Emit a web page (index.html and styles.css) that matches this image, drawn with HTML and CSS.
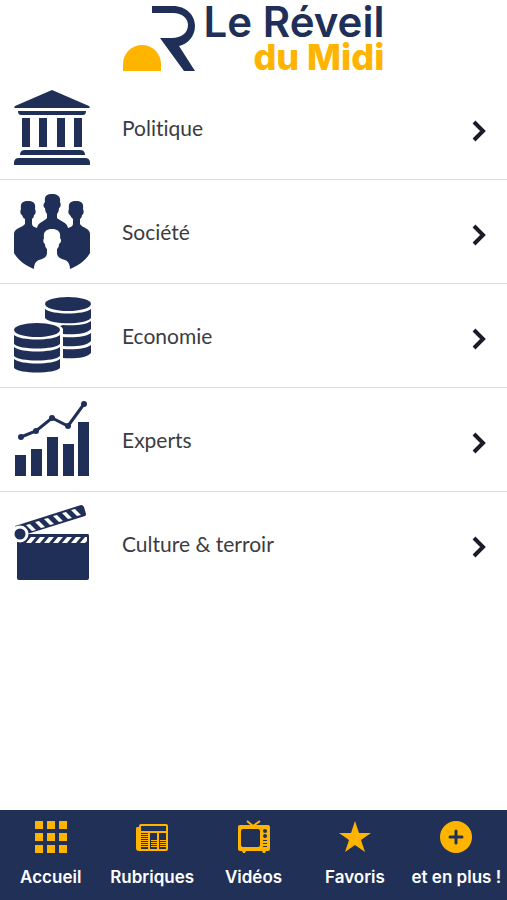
FILE: index.html
```html
<!DOCTYPE html>
<html lang="fr">

<head>
    <meta charset="UTF-8">
    <meta name="viewport" content="width=device-width, initial-scale=1.0">
    <title>Le Réveil du Midi</title>
    <link rel="stylesheet" href="styles.css">
</head>

<body>
    <header class="header">
        <svg class="logo-mark" viewBox="0 0 73 66" aria-hidden="true">
            <path class="navy" d="M29 0H50C63 0 72 9 72 20C72 30 65 38 56 40L72 65H61L37 32H49C58 32 65 27 65 19C65 12 59 7 50 7H29z"/>
            <path class="gold" d="M0 65V58a19 19 0 0 1 38 0v7z"/>
        </svg>
        <h1 class="logo-text">
            <span class="logo-top">Le Réveil</span>
            <span class="logo-bottom">du Midi</span>
        </h1>
    </header>

    <main class="categories">
        <a class="category" href="#politique">
            <svg class="category-icon" viewBox="0 0 76 76" aria-hidden="true">
                <path d="M38 0L75 16Q77 18 74 18H2Q-1 18 1 16z"/>
                <path d="M4 21H72Q72 25 69 25H7Q4 25 4 21z"/>
                <path d="M8 28h8v29H8zM25 28h8v29h-8zM43 28h8v29h-8zM60 28h8v29h-8z"/>
                <path d="M6 65Q6 60 11 60H66Q71 60 71 65z"/>
                <path d="M0 75V73Q0 68 5 68H71Q76 68 76 73V75z"/>
            </svg>
            <span class="category-name">Politique</span>
            <svg class="chevron" viewBox="0 0 16 24" aria-hidden="true"><path d="M3 4L12 13L3 22"/></svg>
        </a>

        <a class="category" href="#societe">
            <svg class="category-icon" viewBox="0 0 76 76" aria-hidden="true">
                <path d="M31 8C30 2 33 0 38 0S47 2 46 8C47 10 47 13 45 14C45 17 44 19 43 20V24C46 27 53 28 54 34C57 33 59 32 59 30V25C58 24 57 23 56 21C54 20 54 17 55 15C54 9 57 7 62 7S70 9 69 15C70 17 70 20 68 21C68 23 67 24 66 25V30C68 34 76 34 76 40V59C72 66 64 72 56 75C56 70 54 67 51 66C47 65 43 63 43 59V55C44 54 45 53 45 50C47 49 48 46 46 44C47 38 44 35 38 35S29 38 30 44C29 46 29 49 31 50C31 53 32 54 33 55V59C33 63 29 65 25 66C22 67 20 70 20 75C12 72 4 66 0 59V40C0 34 8 34 11 30V25C9 24 9 23 8 21C6 20 6 17 7 15C6 9 9 7 14 7S22 9 21 15C22 17 22 20 20 21C20 23 19 24 18 25V30C18 32 20 33 23 34C24 28 31 27 33 24V20C32 19 31 17 31 14C29 13 29 10 31 8z"/>
            </svg>
            <span class="category-name">Société</span>
            <svg class="chevron" viewBox="0 0 16 24" aria-hidden="true"><path d="M3 4L12 13L3 22"/></svg>
        </a>

        <a class="category" href="#economie">
            <svg class="category-icon" viewBox="0 0 76 76" aria-hidden="true">
                <ellipse cx="54" cy="6" rx="23" ry="7"/>
                <path d="M31 11C38 17 70 17 77 11V20C72 27 36 27 31 20z"/>
                <path d="M49 27C60 28 72 27 77 23V31C73 36 59 37 49 36V31Q48 29 46 28z"/>
                <path d="M49 39C60 40 72 39 77 35V43C73 48 59 49 49 48z"/>
                <path d="M49 51C60 52 72 51 77 47V55C73 60 59 61 49 60z"/>
                <ellipse cx="23" cy="32" rx="23" ry="7"/>
                <path d="M0 37C7 43 39 43 46 37V46C41 52 5 52 0 46z"/>
                <path d="M0 49C7 55 39 55 46 49V58C41 64 5 64 0 58z"/>
                <path d="M0 61C7 67 39 67 46 61V70C41 76 5 76 0 70z"/>
            </svg>
            <span class="category-name">Economie</span>
            <svg class="chevron" viewBox="0 0 16 24" aria-hidden="true"><path d="M3 4L12 13L3 22"/></svg>
        </a>

        <a class="category" href="#experts">
            <svg class="category-icon" viewBox="0 0 76 76" aria-hidden="true">
                <path d="M1 53h11v21H1zM17 47h11v27H17zM33 35h11v39H33zM49 42h11v32H49zM64 20h11v54H64z"/>
                <path class="curve" d="M7 35L22 29L38 16L54 24L70 2"/>
                <circle cx="7" cy="35" r="3"/>
                <circle cx="22" cy="29" r="3"/>
                <circle cx="38" cy="16" r="3"/>
                <circle cx="54" cy="24" r="3"/>
                <circle cx="70" cy="2" r="3"/>
            </svg>
            <span class="category-name">Experts</span>
            <svg class="chevron" viewBox="0 0 16 24" aria-hidden="true"><path d="M3 4L12 13L3 22"/></svg>
        </a>

        <a class="category" href="#culture">
            <svg class="category-icon" viewBox="0 0 76 76" aria-hidden="true">
                <!-- slate -->
                <path d="M3 28H74Q75 28 75 30V72Q75 74 73 74H5Q3 74 3 72z"/>
                <path class="cut" d="M17 31h5l-5 6h-5zM26 31h5l-5 6h-5zM35 31h5l-5 6h-5zM44 31h5l-5 6h-5zM53 31h5l-5 6h-5zM62 31h5l-5 6h-5zM71 31h2v4l-2 2h-5z"/>
                <!-- clap stick -->
                <path d="M1 20L67 -1Q69 -1 70 1L72 8Q72 10 71 10L10 29z"/>
                <path class="cut" d="M12 19l4-1 6 6-4 1zM21 16l4-1 6 6-4 1zM30 13l4-1 6 6-4 1zM39 10l4-1 6 6-4 1zM48 7l4-1 6 6-4 1zM57 4l4-1 6 6-4 1z"/>
                <circle class="hinge" cx="6" cy="28" r="7"/>
            </svg>
            <span class="category-name">Culture &amp; terroir</span>
            <svg class="chevron" viewBox="0 0 16 24" aria-hidden="true"><path d="M3 4L12 13L3 22"/></svg>
        </a>
    </main>

    <nav class="tabbar">
        <a class="tab" href="#accueil">
            <svg class="tab-icon" viewBox="0 0 34 34" aria-hidden="true">
                <path d="M1 1h8v8H1zM13 1h8v8h-8zM25 1h8v8h-8zM1 13h8v8H1zM13 13h8v8h-8zM25 13h8v8h-8zM1 25h8v8H1zM13 25h8v8h-8zM25 25h8v8h-8z"/>
            </svg>
            Accueil
        </a>
        <a class="tab" href="#rubriques">
            <svg class="tab-icon" viewBox="0 0 34 34" aria-hidden="true">
                <path d="M4 7H2Q1 7 1 9V28Q1 31 4 31H6V29H4z"/>
                <rect class="line" x="5" y="5" width="27" height="25" rx="1"/>
                <path class="line" d="M5 12H32M14 12V30M23 12V30"/>
                <path class="thin" d="M6 14.500h7M6 16.500h7M6 18.500h7M6 20.500h7M6 22.500h7M6 24.500h7M6 26.500h7M16 20.500h6M16 22.500h6M16 24.500h6M16 26.500h6M25 20.500h6M25 22.500h6M25 24.500h6M25 26.500h6"/>
            </svg>
            Rubriques
        </a>
        <a class="tab" href="#videos">
            <svg class="tab-icon" viewBox="0 0 34 34" aria-hidden="true">
                <path class="line" d="M10 1L16 6L23 1"/>
                <path fill-rule="evenodd" d="M3 5H31Q33 5 33 7V29Q33 31 31 31H29L28 33H26L25 31H9L8 33H6L5 31H3Q1 31 1 29V7Q1 5 3 5zM6 9Q4 9 4 11V25Q4 27 6 27H21Q23 27 23 25V11Q23 9 21 9z"/>
                <circle class="dark" cx="28" cy="11" r="2"/>
                <circle class="dark" cx="28" cy="16" r="2"/>
                <path class="dark" d="M26 20h4v1h-4zM26 23h4v1h-4zM26 26h4v1h-4z"/>
            </svg>
            Vidéos
        </a>
        <a class="tab" href="#favoris">
            <svg class="tab-icon" viewBox="0 0 34 34" aria-hidden="true">
                <path d="M17 1L21 13H33L23 20L27 32L17 25L7 32L11 20L1 13H13z"/>
            </svg>
            Favoris
        </a>
        <a class="tab" href="#plus">
            <svg class="tab-icon" viewBox="0 0 34 34" aria-hidden="true">
                <circle cx="17" cy="17" r="16"/>
                <path class="plus" d="M17 11V23M11 17H23"/>
            </svg>
            et en plus !
        </a>
    </nav>
</body>

</html>
```
FILE: styles.css
```css
* {
    box-sizing: border-box;
}

body {
    margin: 0;
    min-height: 100vh;
    display: flex;
    flex-direction: column;
    background-color: #fff;
    font-family: Inter, sans-serif;
}

a {
    color: inherit;
    text-decoration: none;
}

svg {
    flex: none;
    overflow: visible;
}

.navy {
    fill: #202f57;
}

.gold {
    fill: #ffb400;
}

/* Logo */
.header {
    display: flex;
    justify-content: center;
    gap: 8px;
    padding: 6px 0 4px;
}

.logo-mark {
    width: 73px;
    height: 66px;
}

.logo-text {
    display: flex;
    flex-direction: column;
    align-items: flex-end;
    height: 66px;
    margin: 0;
    color: #202f57;
    white-space: nowrap;
}

.logo-top {
    font-size: 42px;
    font-weight: 600;
    line-height: 32px;
}

.logo-bottom {
    color: #ffb400;
    font-size: 36px;
    font-weight: 800;
    line-height: 38px;
}

/* List of categories */
.categories {
    flex: 1;
}

.category {
    display: flex;
    align-items: center;
    padding: 14px 20px 13px 14px;
    border-bottom: 1px solid #dcdcdc;
    color: #3c3c40;
}

.category:last-child {
    border-bottom-color: transparent;
}

.category-icon {
    width: 76px;
    height: 76px;
    margin-right: 32px;
    fill: #202f57;
}

.category-name {
    flex: 1;
    font-family: Lato, sans-serif;
    font-size: 21px;
    font-variant-ligatures: none;
    line-height: 28px;
}

.curve {
    fill: none;
    stroke: #202f57;
    stroke-width: 3;
}

.cut {
    fill: #fff;
}

.hinge {
    stroke: #fff;
    stroke-width: 3;
}

.chevron {
    width: 16px;
    height: 24px;
    margin-top: 4px;
    fill: none;
    stroke: #1c1c26;
    stroke-width: 4;
}

/* Bottom bar */
.tabbar {
    display: flex;
    padding: 10px 0 11px;
    background-color: #213057;
}

.tab {
    flex: 1 1 0;
    min-width: 0;
    display: flex;
    flex-direction: column;
    align-items: center;
    gap: 11px;
    color: #fff;
    font-size: 17px;
    font-weight: 600;
    line-height: 24px;
    white-space: nowrap;
}

.tab-icon {
    width: 34px;
    height: 34px;
    fill: #ffb400;
}

.line {
    fill: none;
    stroke: #ffb400;
    stroke-width: 2;
}

.thin {
    stroke: #ffb400;
    stroke-width: 1;
}

.dark {
    fill: #213057;
}

.plus {
    stroke: #213057;
    stroke-width: 3;
    stroke-linecap: round;
}
```
